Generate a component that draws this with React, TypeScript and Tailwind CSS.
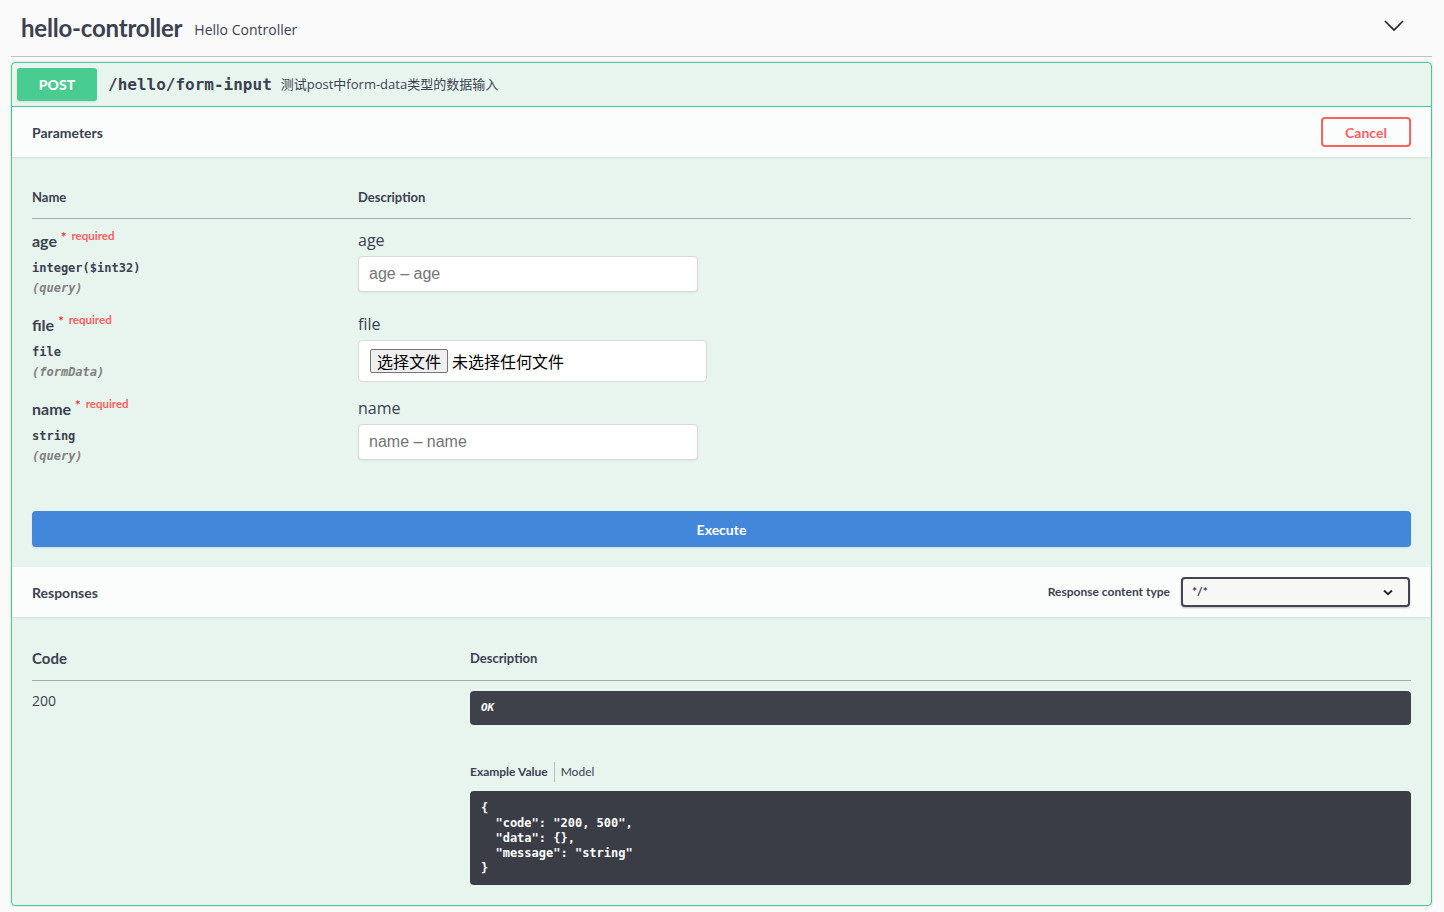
import React from "react";

const sans = "font-['Open_Sans','Noto_Sans_CJK_SC',sans-serif]";
const head = "font-['Lato','Open_Sans',sans-serif]";
const mono = "font-['DejaVu_Sans_Mono','Liberation_Mono',monospace]";

function ParamRow({
  name,
  type,
  where,
  children,
}: {
  name: string;
  type: string;
  where: string;
  children: React.ReactNode;
}) {
  return (
    <div className="flex h-[84px] pt-[11px]">
      <div className="w-[326px] shrink-0">
        <div className="flex h-[22px] items-start">
          <span className={`${head} text-[16px] font-bold leading-[22px] text-[#3b4151]`}>{name}</span>
          <span className={`${head} ml-[4px] mt-[0px] text-[13px] font-bold leading-[14px] text-[#ff3030]`}>
            *
          </span>
          <span className={`${head} ml-[5px] mt-[-1px] text-[11.5px] font-bold leading-[14px] text-[#ff6060]`}>
            required
          </span>
        </div>
        <div className={`${mono} mt-[6px] text-[12px] font-semibold leading-[20px] text-[#3b4151]`}>{type}</div>
        <div className={`${mono} text-[12px] font-semibold italic leading-[20px] text-[#808080]`}>({where})</div>
      </div>
      <div className="flex-1">
        <div className={`${sans} text-[16px] leading-[20px] text-[#3b4151]`}>{name}</div>
        {children}
      </div>
    </div>
  );
}

function TextInput({ placeholder }: { placeholder: string }) {
  return (
    <div className="mt-[6px] flex h-[36px] w-[340px] items-center rounded-[4px] border border-[#d9d9d9] bg-white px-[10px] shadow-[0_1px_2px_rgba(0,0,0,0.05)]">
      <span className="font-['Liberation_Sans',Arial,sans-serif] text-[16px] text-[#757575]">{placeholder}</span>
    </div>
  );
}

export default function App() {
  return (
    <div className={`min-h-[912px] w-full bg-[#fafafa] text-[#3b4151] ${sans}`}>
      <div className="pl-[11px] pr-[12px]">
        {/* Tag header */}
        <div className="flex h-[57px] items-center border-b border-[#3b4151]/30 pl-[10px] pr-[28px]">
          <h3 className={`${head} text-[24px] font-bold tracking-[-0.2px] text-[#3b4151]`}>hello-controller</h3>
          <span className={`${sans} ml-[12px] mt-[2px] text-[14px] text-[#3b4151]`}>Hello Controller</span>
          <div className="flex-1" />
          <svg width="20" height="12" viewBox="0 0 20 12" className="mt-[-4px]">
            <path d="M1 1 L10 10 L19 1" fill="none" stroke="#222" strokeWidth="1.6" />
          </svg>
        </div>

        {/* Opblock */}
        <div className="mt-[5px] rounded-[4px] border border-[#49cc90] bg-[#e8f5ef] shadow-[0_0_3px_rgba(0,0,0,0.15)]">
          {/* summary */}
          <div className="flex h-[44px] items-center border-b border-[#49cc90] px-[5px]">
            <div
              className={`${head} flex h-[33px] w-[80px] items-center justify-center rounded-[3px] bg-[#49cc90] text-[14px] font-black text-white shadow-[0_1px_2px_rgba(0,0,0,0.1)]`}
            >
              POST
            </div>
            <span className={`${mono} ml-[11px] text-[16px] font-semibold text-[#3b4151]`}>/hello/form-input</span>
            <span className={`${sans} ml-[9px] text-[13px] text-[#3b4151]`}>测试post中form-data类型的数据输入</span>
          </div>

          {/* Parameters header */}
          <div className="flex h-[50px] items-center justify-between bg-white/80 pl-[20px] pr-[20px] shadow-[0_1px_2px_rgba(0,0,0,0.1)]">
            <span className={`${head} text-[14px] font-bold`}>Parameters</span>
            <div
              className={`${head} flex h-[30px] w-[90px] items-center justify-center rounded-[4px] border-2 border-[#ff6060] bg-transparent text-[14px] font-bold text-[#ff6060]`}
            >
              Cancel
            </div>
          </div>

          {/* Parameters body */}
          <div className="px-[20px] pt-[20px]">
            <div className={`${head} flex h-[42px] items-center border-b border-[#3b4151]/40 text-[13px] font-bold`}>
              <div className="w-[326px]">Name</div>
              <div>Description</div>
            </div>
            <ParamRow name="age" type="integer($int32)" where="query">
              <TextInput placeholder="age – age" />
            </ParamRow>
            <ParamRow name="file" type="file" where="formData">
              <div className="mt-[6px] flex h-[42px] w-[349px] items-center rounded-[4px] border border-[#d9d9d9] bg-white px-[11px]">
                <div className="flex h-[24px] items-center rounded-[2px] border border-[#767676] bg-[#efefef] px-[6px] font-['Noto_Sans_CJK_SC',sans-serif] text-[16px] leading-none text-black">
                  选择文件
                </div>
                <span className="ml-[4px] font-['Noto_Sans_CJK_SC',sans-serif] text-[16px] text-black">未选择任何文件</span>
              </div>
            </ParamRow>
            <ParamRow name="name" type="string" where="query">
              <TextInput placeholder="name – name" />
            </ParamRow>

            <div className="pb-[20px] pt-[40px]">
              <div
                className={`${head} flex h-[36px] w-full items-center justify-center rounded-[4px] bg-[#4387da] text-[14px] font-bold text-white shadow-[0_1px_2px_rgba(0,0,0,0.1)]`}
              >
                Execute
              </div>
            </div>
          </div>

          {/* Responses header */}
          <div className="flex h-[50px] items-center bg-white/80 pl-[20px] pr-[21px] shadow-[0_1px_2px_rgba(0,0,0,0.1)]">
            <span className={`${head} text-[14px] font-bold`}>Responses</span>
            <div className="flex-1" />
            <span className={`${head} mr-[11px] text-[12px] font-bold`}>Response content type</span>
            <div className="flex h-[30px] w-[229px] items-center justify-between rounded-[4px] border-2 border-[#41444e] bg-[#f7f7f7] pl-[9px] pr-[15px] shadow-[0_1px_2px_rgba(0,0,0,0.25)]">
              <span className={`${head} text-[12px] font-bold text-[#3b4151]`}>*/*</span>
              <svg width="10" height="7" viewBox="0 0 10 7">
                <path d="M1 1.5 L5 5.2 L9 1.5" fill="none" stroke="#222" strokeWidth="1.8" />
              </svg>
            </div>
          </div>

          {/* Responses body */}
          <div className="px-[20px] pb-[20px] pt-[20px]">
            <div className={`${head} flex h-[44px] items-center border-b border-[#3b4151]/40 font-bold`}>
              <div className="w-[438px] text-[15px]">Code</div>
              <div className="text-[13px]">Description</div>
            </div>
            <div className="flex pt-[10px]">
              <div className={`${sans} w-[438px] text-[14px] leading-[20px]`}>200</div>
              <div className="flex-1">
                <div className="flex h-[34px] items-center rounded-[4px] bg-[#3e4149] pl-[11px]">
                  <span className={`${mono} text-[11px] font-bold italic text-white`}>OK</span>
                </div>
                <div className={`${head} mt-[37px] flex h-[20px] items-center text-[12px]`}>
                  <span className="font-bold">Example Value</span>
                  <span className="mx-[6px] h-[20px] w-px bg-[#3b4151]/30" />
                  <span className="text-[#3b4151]">Model</span>
                </div>
                <pre
                  className={`${mono} mt-[9px] h-[94px] rounded-[4px] bg-[#3a3d45] px-[11px] pt-[10px] text-[12px] font-bold leading-[15px] text-white`}
                >
{`{
  "code": "200, 500",
  "data": {},
  "message": "string"
}`}
                </pre>
              </div>
            </div>
          </div>
        </div>
      </div>
    </div>
  );
}
